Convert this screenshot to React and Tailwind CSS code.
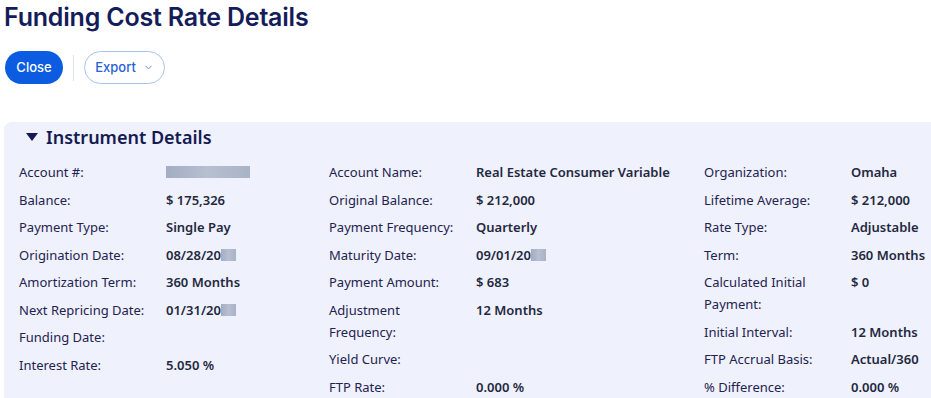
import { ChevronDown } from "lucide-react";

const Blur = ({ w }) => (
  <span
    className="inline-block h-[12px] align-[-1px] bg-gradient-to-r from-[#a3adc2] via-[#b7bfd0] to-[#a9b3c7]"
    style={{ width: w }}
  />
);

const col1 = [
  ["Account #:", <Blur w={84} />],
  ["Balance:", "$ 175,326"],
  ["Payment Type:", "Single Pay"],
  ["Origination Date:", <>08/28/20<Blur w={15} /></>],
  ["Amortization Term:", "360 Months"],
  ["Next Repricing Date:", <>01/31/20<Blur w={15} /></>],
  ["Funding Date:", ""],
  ["Interest Rate:", "5.050 %"],
];

const col2 = [
  ["Account Name:", "Real Estate Consumer Variable"],
  ["Original Balance:", "$ 212,000"],
  ["Payment Frequency:", "Quarterly"],
  ["Maturity Date:", <>09/01/20<Blur w={15} /></>],
  ["Payment Amount:", "$ 683"],
  ["Adjustment Frequency:", "12 Months"],
  ["Yield Curve:", ""],
  ["FTP Rate:", "0.000 %"],
];

const col3 = [
  ["Organization:", "Omaha"],
  ["Lifetime Average:", "$ 212,000"],
  ["Rate Type:", "Adjustable"],
  ["Term:", "360 Months"],
  ["Calculated Initial Payment:", "$ 0"],
  ["Initial Interval:", "12 Months"],
  ["FTP Accrual Basis:", "Actual/360"],
  ["% Difference:", "0.000 %"],
];

const Column = ({ rows, width }) => (
  <div className="flex flex-col gap-[5.5px] shrink-0" style={{ width }}>
    {rows.map(([label, value]) => (
      <div key={label} className="flex leading-[22px] text-[13px]">
        <div className="w-[147px] shrink-0 pr-3 text-[#1e2350]">{label}</div>
        <div className="font-semibold text-[#1f2940] whitespace-nowrap">{value}</div>
      </div>
    ))}
  </div>
);

export default function App() {
  return (
    <div className="w-[931px] h-[398px] overflow-hidden bg-white" style={{ fontFamily: "'Noto Sans', sans-serif" }}>
      <h1
        className="pl-[4px] pt-[2px] text-[25px] leading-[30px] font-semibold text-[#141c5a] tracking-[-0.2px]"
        style={{ fontFamily: "Inter, sans-serif" }}
      >
        Funding Cost Rate Details
      </h1>
      <div className="flex items-center pl-[5px] mt-[19px]" style={{ fontFamily: "Inter, sans-serif" }}>
        <button className="h-[33px] w-[58px] rounded-full bg-[#0b5ce0] text-white text-[13px] font-medium">
          Close
        </button>
        <div className="w-px h-[26px] bg-[#dde1ea] mx-[10px]" />
        <button className="h-[33px] w-[81px] rounded-full border border-[#a8c2ee] text-[#2762d6] text-[13px] font-medium flex items-center justify-center gap-[7px]">
          Export
          <ChevronDown size={11} strokeWidth={2} className="text-[#5a7fd0]" />
        </button>
      </div>
      <div className="ml-[4px] mt-[38px] bg-[#eff1fc] rounded-tl-[8px] h-[300px] pl-[15px] pt-[2px]">
        <div className="flex items-center h-[26px] pl-[7px]">
          <svg width="12" height="8" viewBox="0 0 12 8" className="mr-[8px]">
            <path d="M0 0H12L6 8Z" fill="#141a52" />
          </svg>
          <span className="text-[18px] font-semibold text-[#141a52]">Instrument Details</span>
        </div>
        <div className="flex mt-[11px]">
          <Column rows={col1} width={310} />
          <Column rows={col2} width={375} />
          <Column rows={col3} width={230} />
        </div>
      </div>
    </div>
  );
}
